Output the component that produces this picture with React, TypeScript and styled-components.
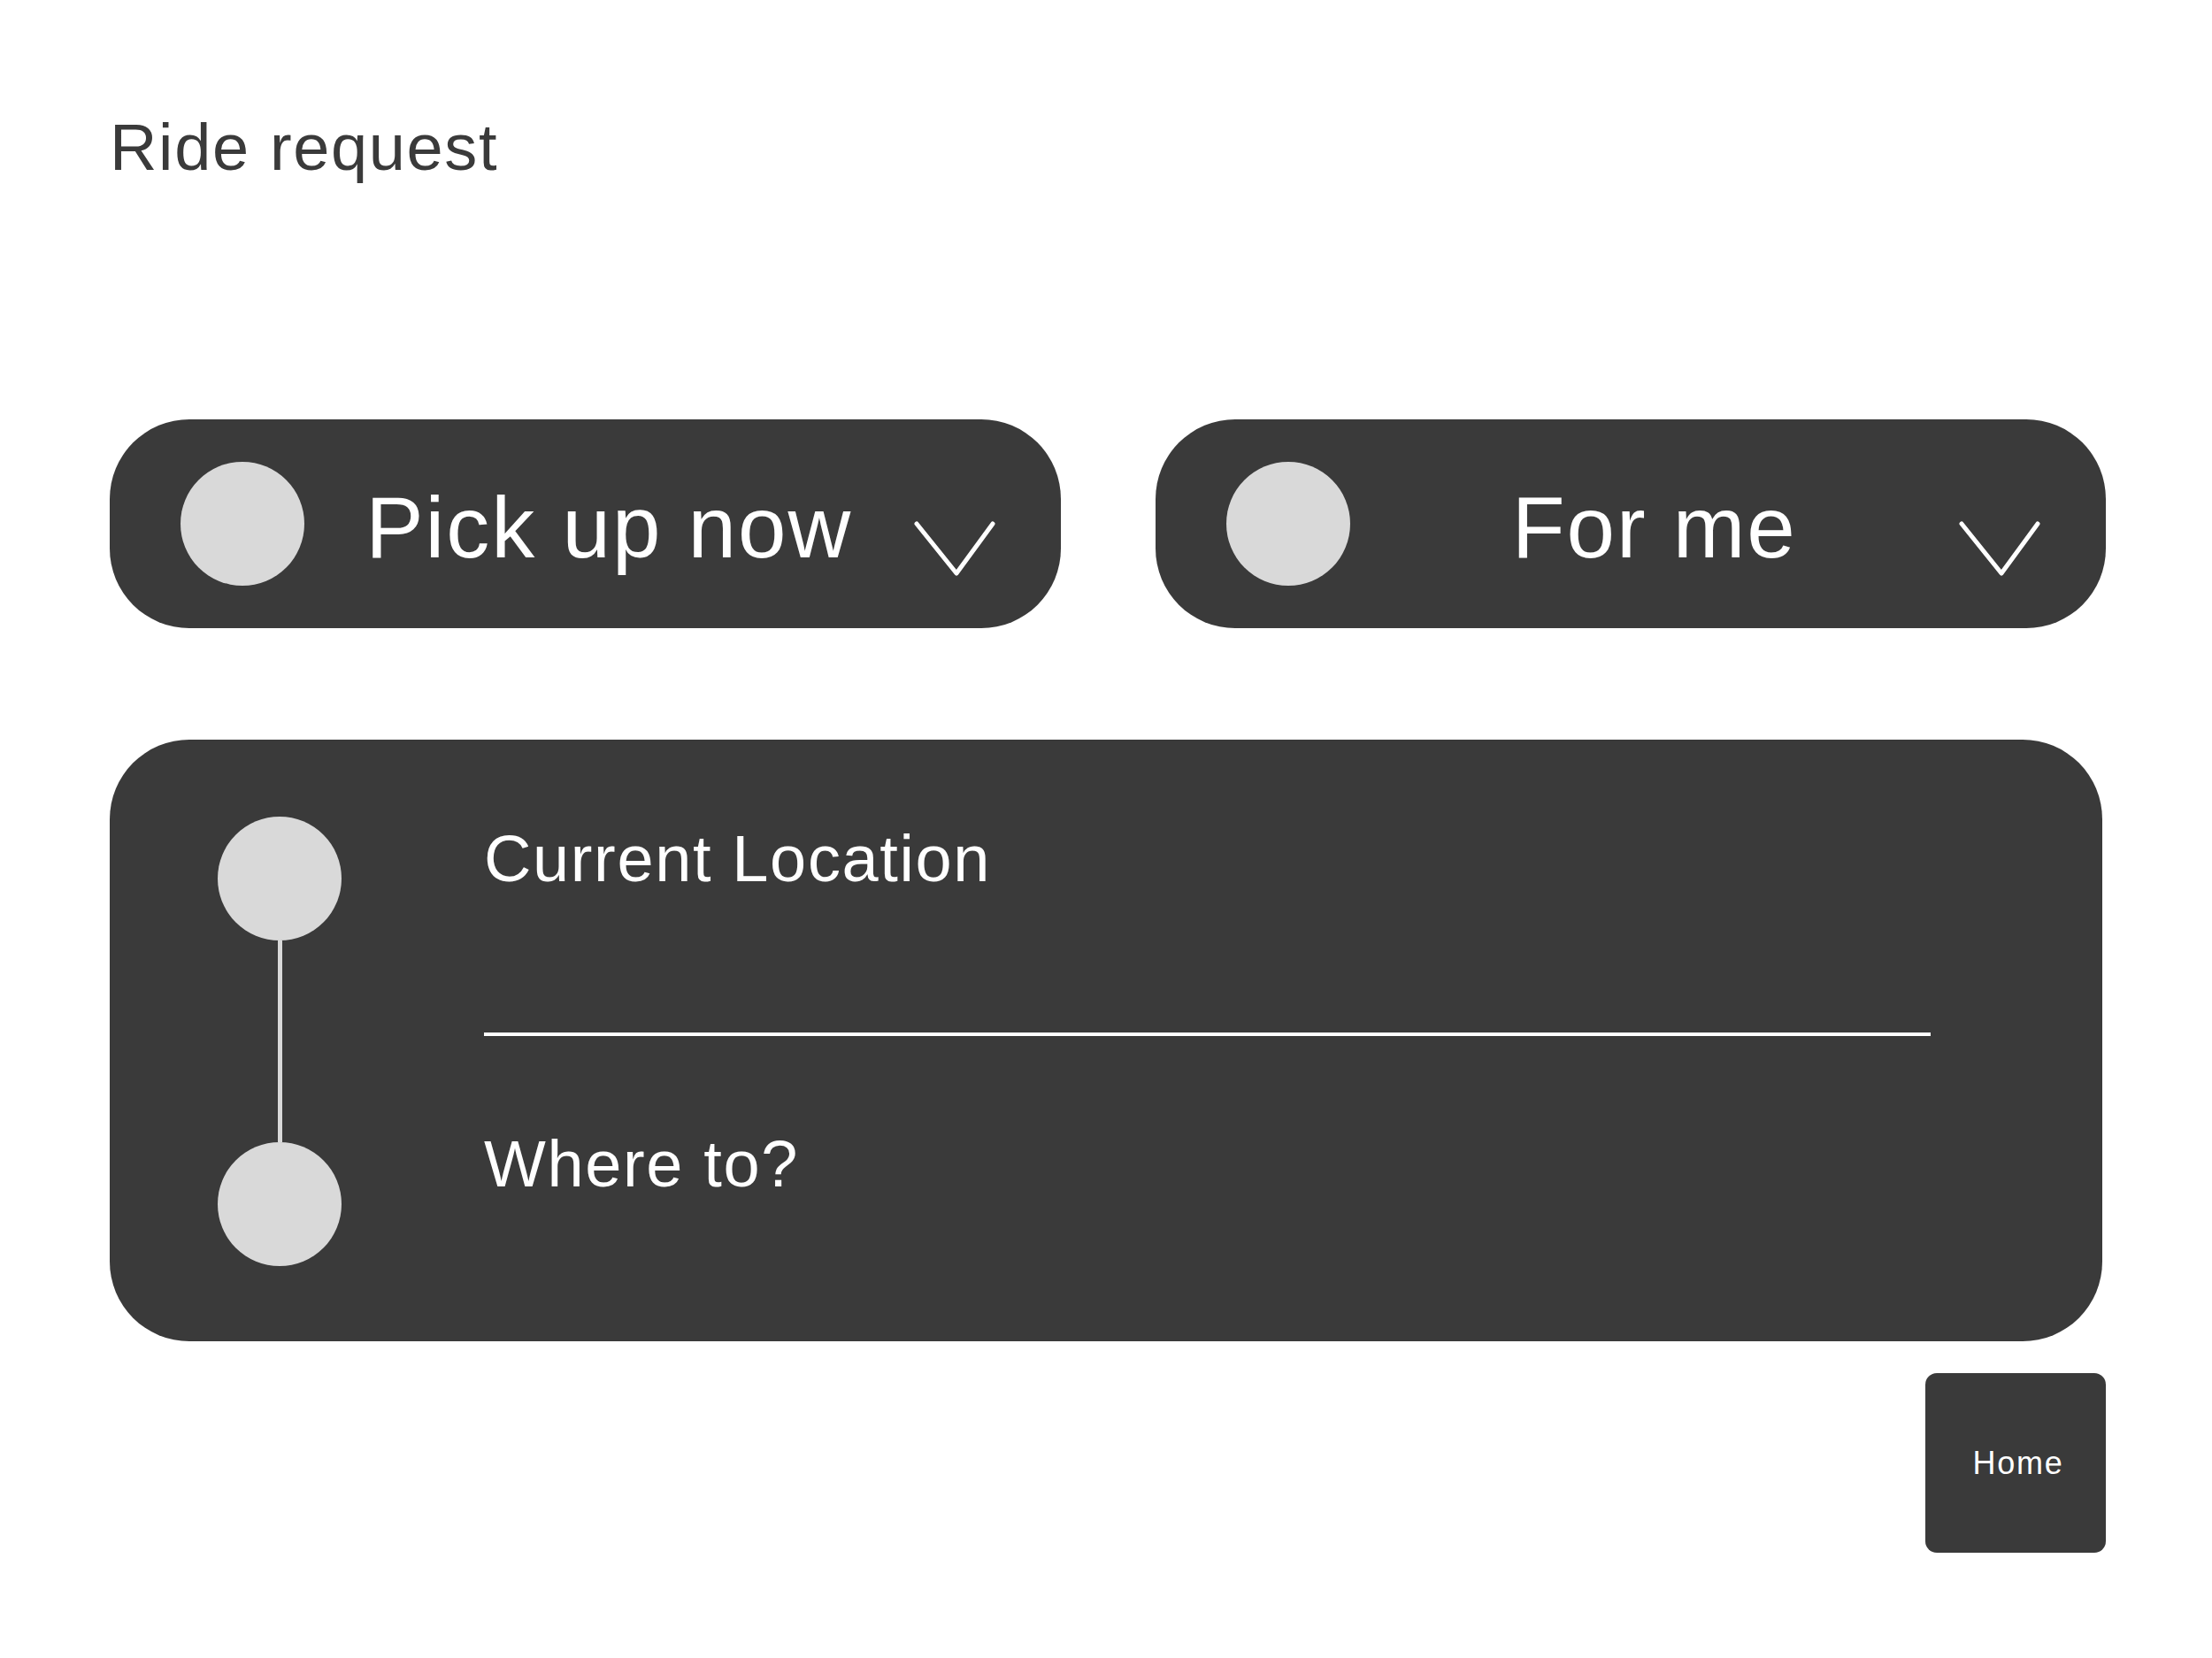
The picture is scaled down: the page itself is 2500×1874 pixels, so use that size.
import React from "react";
import styled, { createGlobalStyle } from "styled-components";

const GlobalStyle = createGlobalStyle`
  html, body {
    margin: 0;
    padding: 0;
    background: #ffffff;
  }
  body {
    font-family: "Liberation Sans", Arial, sans-serif;
  }
`;

const Page = styled.main`
  width: 2500px;
  min-height: 1874px;
  box-sizing: border-box;
  padding: 130px 120px 0 124px;
  display: flex;
  flex-direction: column;
`;

const Title = styled.h1`
  margin: 0;
  font-family: "Liberation Sans", Arial, sans-serif;
  font-weight: 400;
  font-size: 74px;
  line-height: 1;
  letter-spacing: 0.022em;
  color: #3a3a3a;
`;

const SelectorRow = styled.div`
  margin-top: 270px;
  display: grid;
  grid-template-columns: 1fr 1fr;
  column-gap: 107px;
`;

const Pill = styled.button`
  height: 236px;
  box-sizing: border-box;
  border: none;
  border-radius: 90px;
  background: #3a3a3a;
  padding: 0 74px 0 80px;
  display: flex;
  align-items: center;
  cursor: pointer;
`;

const Dot = styled.span`
  flex: none;
  width: 140px;
  height: 140px;
  border-radius: 50%;
  background: #d9d9d9;
  display: block;
`;

const PillLabel = styled.span`
  flex: 1;
  text-align: center;
  margin-top: 7px;
  font-family: "Liberation Sans", Arial, sans-serif;
  font-size: 98px;
  line-height: 1;
  letter-spacing: 0.02em;
  color: #ffffff;
  white-space: nowrap;
`;

const Chevron = styled.svg`
  flex: none;
  width: 92px;
  height: 62px;
  margin-top: 56px;
`;

const RouteCard = styled.section`
  margin-top: 126px;
  margin-right: 4px;
  height: 680px;
  box-sizing: border-box;
  border-radius: 90px;
  background: #3a3a3a;
  padding: 87px 194px 85px 122px;
  display: grid;
  grid-template-columns: 140px 1fr;
  column-gap: 161px;
`;

const Track = styled.div`
  display: flex;
  flex-direction: column;
  align-items: center;
`;

const TrackLine = styled.span`
  flex: 1;
  width: 5px;
  background: #d9d9d9;
  display: block;
`;

const Fields = styled.div`
  display: flex;
  flex-direction: column;
`;

const FieldText = styled.div<{ $offset: number }>`
  margin-top: ${(p) => p.$offset}px;
  font-family: "Liberation Sans", Arial, sans-serif;
  font-size: 74px;
  line-height: 1;
  letter-spacing: 0.022em;
  color: #ffffff;
`;

const Divider = styled.hr`
  margin: 159px 0 0 0;
  height: 4px;
  border: none;
  background: #ffffff;
`;

const Footer = styled.div`
  margin-top: 36px;
  display: flex;
  justify-content: flex-end;
`;

const HomeButton = styled.button`
  width: 204px;
  height: 203px;
  border: none;
  border-radius: 13px;
  background: #3a3a3a;
  color: #ffffff;
  font-family: "Liberation Sans", Arial, sans-serif;
  font-size: 36px;
  letter-spacing: 0.05em;
  display: flex;
  align-items: center;
  justify-content: center;
  padding: 0 0 0 6px;
  cursor: pointer;
`;

const ChevronIcon = () => (
  <Chevron viewBox="0 0 92 62" fill="none">
    <path
      d="M3 3 L48 59 L89 3"
      stroke="#ffffff"
      strokeWidth="5"
      strokeLinecap="round"
      strokeLinejoin="round"
    />
  </Chevron>
);

const Selector = ({ label }: { label: string }) => (
  <Pill type="button">
    <Dot />
    <PillLabel>{label}</PillLabel>
    <ChevronIcon />
  </Pill>
);

export default function App() {
  return (
    <>
      <GlobalStyle />
      <Page>
        <Title>Ride request</Title>
        <SelectorRow>
          <Selector label="Pick up now" />
          <Selector label="For me" />
        </SelectorRow>
        <RouteCard>
          <Track>
            <Dot />
            <TrackLine />
            <Dot />
          </Track>
          <Fields>
            <FieldText $offset={11}>Current Location</FieldText>
            <Divider />
            <FieldText $offset={108}>Where to?</FieldText>
          </Fields>
        </RouteCard>
        <Footer>
          <HomeButton type="button">Home</HomeButton>
        </Footer>
      </Page>
    </>
  );
}
